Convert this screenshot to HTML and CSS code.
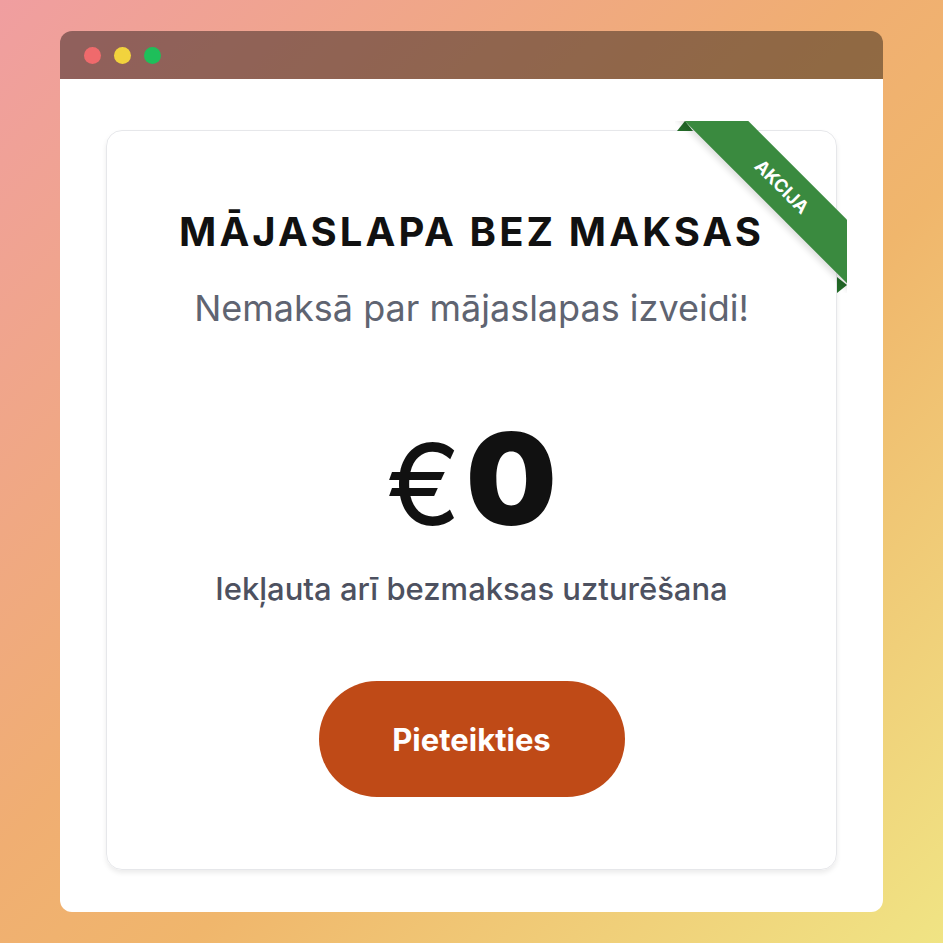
FILE: index.html
```html
<!DOCTYPE html>
<html lang="lv">
<head>
<meta charset="utf-8">
<title>Mājaslapa bez maksas</title>
<link rel="stylesheet" href="styles.css">
</head>
<body>
<div class="window">
  <div class="titlebar">
    <span class="dot red"></span>
    <span class="dot yellow"></span>
    <span class="dot green"></span>
  </div>
  <div class="content">
    <div class="card">
      <div class="ribbon"><span>AKCIJA</span></div>
      <h1 class="title">MĀJASLAPA BEZ MAKSAS</h1>
      <p class="subtitle">Nemaksā par mājaslapas izveidi!</p>
      <div class="price"><span class="cur">€</span><span class="num">0</span></div>
      <p class="note">Iekļauta arī bezmaksas uzturēšana</p>
      <a class="btn" href="#">Pieteikties</a>
    </div>
  </div>
</div>
</body>
</html>
```
FILE: styles.css
```css
* { box-sizing: border-box; }
html, body { margin: 0; height: 100%; }
body {
  background: linear-gradient(135deg, #f09ea0 0%, #f0ae72 45%, #f0b66c 60%, #f0e484 100%);
  padding: 31px 60px 31px 60px;
  font-family: Inter, "Noto Sans", sans-serif;
}
.window {
  height: 881px;
  border-radius: 12px;
  overflow: hidden;
  display: flex;
  flex-direction: column;
}
.titlebar {
  height: 48px;
  background: rgba(0, 0, 0, 0.4);
  display: flex;
  align-items: center;
  gap: 13px;
  padding-left: 24px;
}
.dot { width: 17px; height: 17px; border-radius: 50%; }
.red { background: #ef6a6c; }
.yellow { background: #f2d33d; }
.green { background: #1ebf5a; }
.content {
  flex: 1;
  background: #fff;
  padding: 51px 46px 42px 46px;
  display: flex;
}
.card {
  position: relative;
  flex: 1;
  border: 1px solid #e6e7ea;
  border-radius: 16px;
  box-shadow: 0 3px 5px rgba(0, 0, 0, 0.08);
  display: flex;
  flex-direction: column;
  align-items: center;
  padding-top: 77px;
}
.title {
  margin: 0;
  font-size: 40px;
  font-weight: 700;
  letter-spacing: 3.1px;
  color: #111;
  line-height: 48px;
}
.subtitle {
  margin: 30px 0 0;
  font-size: 36px;
  font-weight: 400;
  color: #5f6471;
  line-height: 44px;
}
.price {
  margin-top: 94px;
  display: flex;
  align-items: baseline;
  gap: 5px;
  line-height: 110px;
  color: #111;
}
.cur { font-size: 112px; font-weight: 400; }
.num { font-size: 128px; font-weight: 900; }
.note {
  margin: 30px 0 0;
  font-size: 31px;
  font-weight: 500;
  color: #4d5160;
  line-height: 40px;
}
.btn {
  margin-top: 72px;
  width: 306px;
  height: 116px;
  border-radius: 58px;
  background: #bf4a17;
  color: #fff;
  text-decoration: none;
  font-size: 31px;
  font-weight: 700;
  display: flex;
  align-items: center;
  justify-content: center;
}
.ribbon {
  position: absolute;
  top: -10px;
  right: -11px;
  width: 172px;
  height: 172px;
  overflow: hidden;
  z-index: 1;
}
.ribbon::before, .ribbon::after {
  content: "";
  position: absolute;
  background: #236a28;
  z-index: 0;
}
.ribbon::before { left: 2px; top: 0; width: 16px; height: 10px; clip-path: polygon(0 100%, 50% 0, 100% 100%); }
.ribbon::after { right: 0; top: 156px; width: 10px; height: 16px; clip-path: polygon(0 0, 100% 50%, 0 100%); }
.ribbon span {
  position: absolute;
  z-index: 1;
  left: -23px;
  top: 43px;
  width: 260px;
  height: 45px;
  line-height: 45px;
  text-align: center;
  background: #3a8a3f;
  color: #fff;
  font-size: 18px;
  font-weight: 700;
  transform: rotate(45deg);
  box-shadow: 0 4px 6px rgba(0,0,0,0.12);
}
```
